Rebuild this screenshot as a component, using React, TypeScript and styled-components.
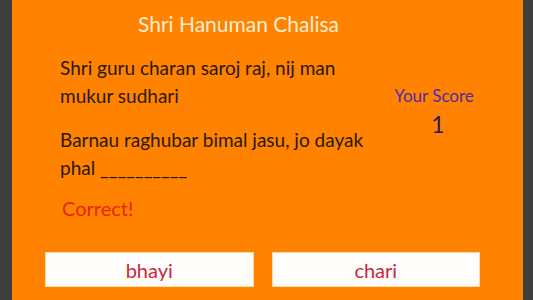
import { FC } from 'react';
import styled, { createGlobalStyle } from 'styled-components';

const GlobalStyle = createGlobalStyle`
  html, body {
    margin: 0;
    padding: 0;
    background: #3f3f3f;
  }
  body {
    font-family: Lato, "Noto Sans", sans-serif;
  }
`;

const Screen = styled.div`
  width: 533px;
  height: 300px;
  background: #3f3f3f;
  display: flex;
  justify-content: flex-start;
  padding-left: 12px;
  box-sizing: border-box;
`;

const Panel = styled.div`
  width: 511px;
  height: 300px;
  background: #ff8300;
  display: flex;
  flex-direction: column;
  box-sizing: border-box;
  padding-top: 10px;
`;

const Title = styled.h1`
  margin: 0;
  padding-right: 58px;
  text-align: center;
  font-size: 21px;
  font-weight: 400;
  line-height: 28px;
  color: #fdecd2;
`;

const Body = styled.div`
  display: flex;
  padding-left: 48px;
  margin-top: 16px;
`;

const Lyrics = styled.div`
  width: 322px;
`;

const Verse = styled.p`
  margin: 0 0 16px;
  font-size: 19px;
  line-height: 28px;
  color: #2a1804;
`;

const Result = styled.p`
  margin: -4px 0 0;
  padding-left: 2px;
  font-size: 20px;
  line-height: 28px;
  color: #e9230c;
`;

const ScoreBox = styled.div`
  width: 104px;
  display: flex;
  flex-direction: column;
  align-items: center;
  padding-top: 28px;
`;

const ScoreLabel = styled.div`
  font-size: 17px;
  line-height: 28px;
  color: #5529a6;
`;

const ScoreValue = styled.div`
  padding-left: 8px;
  font-size: 23px;
  line-height: 28px;
  color: #281a5c;
`;

const Choices = styled.div`
  display: grid;
  grid-template-columns: 1fr 1fr;
  gap: 18px;
  padding: 0 43px 0 33px;
  margin-top: auto;
  margin-bottom: 13px;
`;

const Choice = styled.button`
  height: 35px;
  background: #fffdfb;
  border: 1px solid #ffd9a8;
  font-family: Lato, "Noto Sans", sans-serif;
  font-size: 20px;
  color: #c9283c;
  cursor: pointer;
`;

const App: FC = () => {
  const options = ['bhayi', 'chari'];
  return (
    <>
      <GlobalStyle />
      <Screen>
        <Panel>
          <Title>Shri Hanuman Chalisa</Title>
          <Body>
            <Lyrics>
              <Verse>Shri guru charan saroj raj, nij man mukur sudhari</Verse>
              <Verse>Barnau raghubar bimal jasu, jo dayak phal __________</Verse>
              <Result>Correct!</Result>
            </Lyrics>
            <ScoreBox>
              <ScoreLabel>Your Score</ScoreLabel>
              <ScoreValue>1</ScoreValue>
            </ScoreBox>
          </Body>
          <Choices>
            {options.map(o => (
              <Choice key={o} type="button">{o}</Choice>
            ))}
          </Choices>
        </Panel>
      </Screen>
    </>
  );
};

export default App;
